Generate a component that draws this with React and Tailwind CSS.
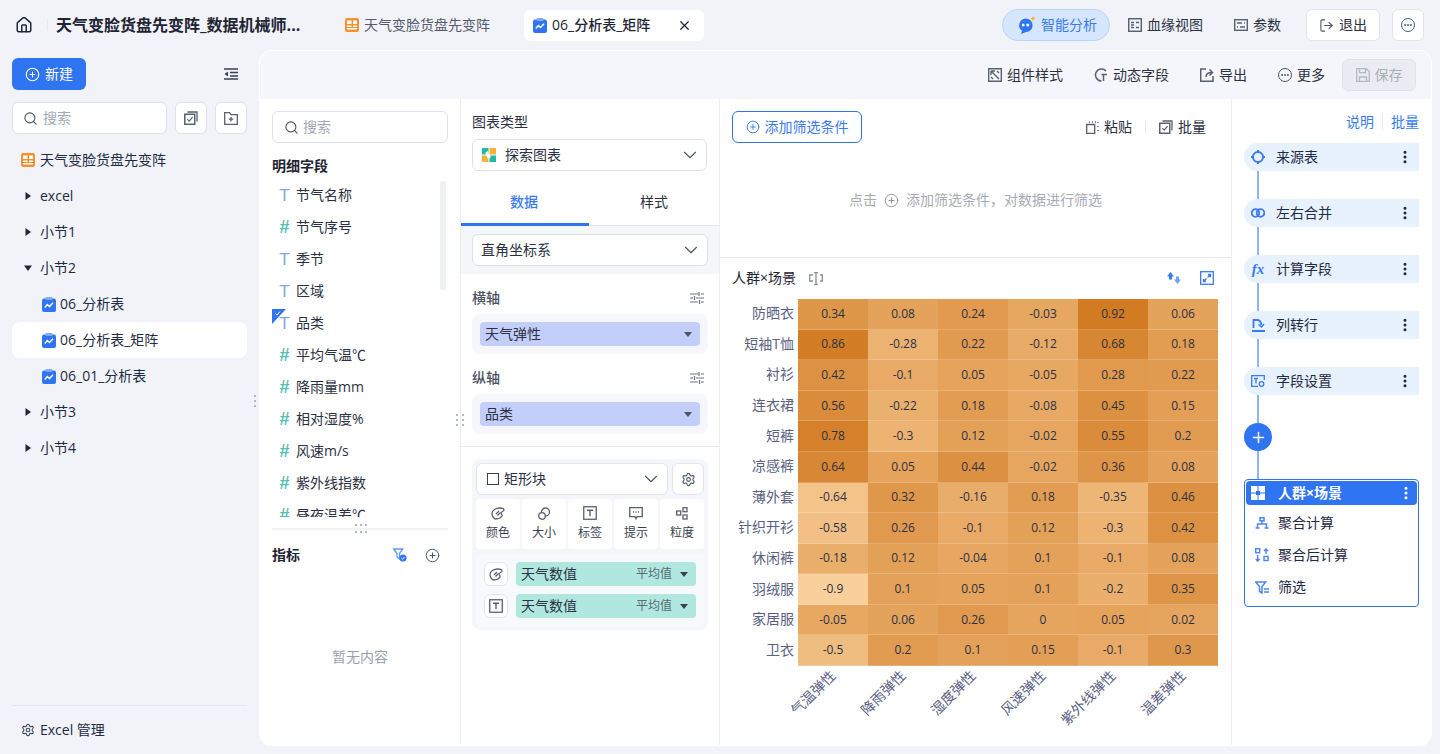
import React from "react";
import {
  House, CirclePlus, Search, X, ChevronDown, Ellipsis, LogOut, Settings, Plus, EllipsisVertical,
} from "lucide-react";

const BLUE = "#2f74f0";
const fieldList = [
  ["T", "节气名称"], ["#", "节气序号"], ["T", "季节"], ["T", "区域"], ["T", "品类", true], ["#", "平均气温℃"],
  ["#", "降雨量mm"], ["#", "相对湿度%"], ["#", "风速m/s"], ["#", "紫外线指数"], ["#", "昼夜温差℃"],
];
const rowLabels = ["防晒衣", "短袖T恤", "衬衫", "连衣裙", "短裤", "凉感裤", "薄外套", "针织开衫", "休闲裤", "羽绒服", "家居服", "卫衣"];
const colLabels = ["气温弹性", "降雨弹性", "湿度弹性", "风速弹性", "紫外线弹性", "温差弹性"];
const matrix = [
  [0.34, 0.08, 0.24, -0.03, 0.92, 0.06],
  [0.86, -0.28, 0.22, -0.12, 0.68, 0.18],
  [0.42, -0.1, 0.05, -0.05, 0.28, 0.22],
  [0.56, -0.22, 0.18, -0.08, 0.45, 0.15],
  [0.78, -0.3, 0.12, -0.02, 0.55, 0.2],
  [0.64, 0.05, 0.44, -0.02, 0.36, 0.08],
  [-0.64, 0.32, -0.16, 0.18, -0.35, 0.46],
  [-0.58, 0.26, -0.1, 0.12, -0.3, 0.42],
  [-0.18, 0.12, -0.04, 0.1, -0.1, 0.08],
  [-0.9, 0.1, 0.05, 0.1, -0.2, 0.35],
  [-0.05, 0.06, 0.26, 0, 0.05, 0.02],
  [-0.5, 0.2, 0.1, 0.15, -0.1, 0.3],
];

// value -> cell colour, light peach to deep orange
const cellColor = (v) => {
  const t = (v + 0.9) / 1.82;
  const r = Math.round(249 - 39 * t);
  const g = Math.round(207 - 84 * t);
  const b = Math.round(155 - 121 * t);
  return `rgb(${r},${g},${b})`;
};

function OrangeIcon({ size = 14 }) {
  return (
    <svg width={size} height={size} viewBox="0 0 14 14" className="shrink-0">
      <rect width="14" height="14" rx="2" fill="#f7902f" />
      <rect x="2" y="2.5" width="4.5" height="3.5" fill="#fff" />
      <rect x="8" y="2.5" width="4" height="3.5" fill="#fff" />
      <rect x="2" y="7.5" width="4.5" height="1.5" fill="#fff" />
      <rect x="2" y="10" width="10" height="1.5" fill="#fff" />
      <rect x="8" y="7.5" width="4" height="1.5" fill="#fff" />
    </svg>
  );
}

function ChartIcon() {
  return (
    <svg width="14" height="15" viewBox="0 0 14 15" className="shrink-0">
      <rect y="1.5" width="14" height="13.5" rx="2" fill={BLUE} />
      <rect x="3.5" y="0" width="7" height="3" rx="1" fill="#7fa9f5" />
      <path d="M2.8 10.5 5.3 7.5 7.5 9.5 11 5.8" fill="none" stroke="#fff" strokeWidth="1.5" />
    </svg>
  );
}

function BoxCheckIcon({ color = "#5b6070" }) {
  return (
    <svg width="14" height="14" viewBox="0 0 14 14" fill="none" stroke={color} className="shrink-0">
      <rect x="0.75" y="3.25" width="10" height="10" strokeWidth="1.5" />
      <path d="M3.5 1h9.5v9.5" strokeWidth="1.3" />
      <path d="M3.2 8.2 5.2 10.2 8.6 6.2" strokeWidth="1.2" />
    </svg>
  );
}

function Caret({ open }) {
  return (
    <svg width="8" height="8" viewBox="0 0 8 8" className="shrink-0">
      {open ? <path d="M0 1.5h8L4 7z" fill="#1f2937" /> : <path d="M1.5 0v8L7 4z" fill="#1f2937" />}
    </svg>
  );
}

function TreeRow({ children, active, indent }) {
  return (
    <div className={`h-9 flex items-center rounded-lg text-sm text-[#1f2a44] ${active ? "bg-white" : ""} ${indent ? "pl-[30px]" : "pl-[12px]"}`}>
      {children}
    </div>
  );
}

function SelectBox({ children, className }) {
  return (
    <div className={`h-8 bg-white border border-[#dcdfe6] rounded-md flex items-center text-sm text-[#2b3142] ${className}`}>
      {children}
    </div>
  );
}

function SlidersIcon() {
  return (
    <svg width="14" height="12" viewBox="0 0 14 12" stroke="#6b7280" strokeWidth="1.2" className="shrink-0">
      <path d="M0 2h8M11 2h3M0 6h3M6 6h8M0 10h8M11 10h3" />
      <path d="M9 0v4M4.5 4v4M9.5 8v4" />
    </svg>
  );
}

function AxisPill({ label }) {
  return (
    <div className="h-10 bg-[#f6f7fb] rounded-lg px-2 flex items-center">
      <div className="w-full h-6 bg-[#c3cefa] rounded flex items-center justify-between pl-[5px] pr-[8px] text-sm text-[#2b3142]">
        {label}
        <svg width="8" height="5" viewBox="0 0 8 5"><path d="M0 0h8L4 5z" fill="#4b5563" /></svg>
      </div>
    </div>
  );
}

function MarkButton({ icon, label }) {
  return (
    <div className="h-[50px] w-11 bg-white rounded flex flex-col items-center pt-[7px] gap-[5px] text-xs text-[#3a4152]">
      <div className="h-[14px] flex items-center">{icon}</div>
      <span className="leading-4">{label}</span>
    </div>
  );
}

function PaletteIcon() {
  return (
    <svg width="14" height="13" viewBox="0 0 14 13" fill="none" stroke="#5b6070" strokeWidth="1.3" className="shrink-0">
      <path d="M1 6.5C1 3 5 1 8.5 1c2 0 4.5.8 4.5 2 0 1.5-3 1.5-3 3s2 1.5 1 3-3 3-6 3C3 12 1 9.5 1 6.5z" />
      <path d="M5 7l3-3M6.5 8.5l3-3" />
    </svg>
  );
}

function TBoxIcon() {
  return (
    <svg width="14" height="14" viewBox="0 0 14 14" fill="none" stroke="#5b6070" className="shrink-0">
      <rect x="0.75" y="0.75" width="12.5" height="12.5" strokeWidth="1.3" />
      <path d="M4 4.2h6M7 4.2v6" strokeWidth="1.4" />
    </svg>
  );
}

function FieldPill({ icon }) {
  return (
    <div className="flex items-center gap-2">
      <div className="w-6 h-6 bg-white border border-[#e4e6eb] rounded-md flex items-center justify-center">{icon}</div>
      <div className="w-[180px] h-6 bg-[#b0e8e0] rounded flex items-center pl-[5px] pr-[8px] text-sm text-[#2b3142]">
        <span className="flex-1">天气数值</span>
        <span className="text-xs text-[#5b6b70] mr-[8px]">平均值</span>
        <svg width="8" height="5" viewBox="0 0 8 5"><path d="M0 0h8L4 5z" fill="#374151" /></svg>
      </div>
    </div>
  );
}

function FlowNode({ icon, label }) {
  return (
    <div className="h-7 bg-[#e8f1fe] rounded-l-full rounded-r-lg flex items-center pl-[7px] pr-[6px] text-sm text-[#1f2a44]">
      <div className="w-[14px] h-[14px] flex items-center justify-center shrink-0">{icon}</div>
      <span className="ml-[11px] flex-1">{label}</span>
      <EllipsisVertical size={16} strokeWidth={2.6} color="#1f2937" />
    </div>
  );
}

const FlowLine = () => <div className="w-[2px] h-7 ml-[13px] bg-[#8fb5f7]" />;

function SubItem({ icon, label }) {
  return (
    <div className="h-8 flex items-center pl-[9px] text-sm text-[#1f2a44]">
      <div className="w-[14px] flex justify-center shrink-0">{icon}</div>
      <span className="ml-[9px]">{label}</span>
    </div>
  );
}

function Tool({ icon, label, className }) {
  return (
    <div className={`flex items-center gap-[5px] text-sm text-[#2b3142] ${className || ""}`}>
      {icon}
      <span>{label}</span>
    </div>
  );
}

function MoreDot() {
  return (
    <div className="w-[14px] h-[14px] rounded-full border border-[#4b5563] flex items-center justify-center shrink-0">
      <Ellipsis size={10} strokeWidth={2.5} color="#4b5563" />
    </div>
  );
}

function Grip({ className, count = 6 }) {
  return (
    <div className={`absolute grid ${className}`}>
      {Array.from({ length: count }).map((_, i) => (
        <span key={i} className="w-[2px] h-[2px] bg-[#b4b8c2]" />
      ))}
    </div>
  );
}

export default function App() {
  return (
    <div className="h-screen w-full overflow-hidden bg-[#f1f3f9] flex flex-col font-['Open_Sans','Noto_Sans_CJK_SC',sans-serif]">
      {/* Top bar */}
      <header className="h-[50px] shrink-0 flex items-center pl-[15px] pr-4">
        <House size={18} strokeWidth={2} color="#1f2937" className="shrink-0" />
        <div className="w-px h-3 bg-[#e5e7eb] ml-[14px]" />
        <div className="w-[250px] ml-2 text-base font-bold text-[#1f2433] whitespace-nowrap">天气变脸货盘先变阵_数据机械师...</div>
        <div className="ml-[39px] flex items-center gap-[5px] text-sm text-[#555b6b] w-[179px]">
          <OrangeIcon />
          <span className="whitespace-nowrap">天气变脸货盘先变阵</span>
        </div>
        <div className="h-[31px] w-[180px] bg-white rounded-md flex items-center pl-[9px] pr-[12px] gap-[5px] text-sm font-medium text-[#1f2433]">
          <ChartIcon />
          <span className="flex-1 whitespace-nowrap">06_分析表_矩阵</span>
          <X size={15} strokeWidth={2} color="#1f2937" />
        </div>
        <div className="ml-auto h-8 w-[108px] rounded-full bg-[#d6e6ff] border border-[#b9d3fb] flex items-center pl-[14px] gap-[4px] text-sm text-[#3a7bf0]">
          <svg width="20" height="20" viewBox="0 0 20 20" className="shrink-0">
            <path d="M8.5 3.5a6.8 6.8 0 0 1 .6 13.6L4 19l1-3.2A6.8 6.8 0 0 1 8.5 3.5z" fill="#2f74f0" />
            <circle cx="6.2" cy="10" r="1.5" fill="#fff" />
            <circle cx="10.8" cy="10" r="1.5" fill="#fff" />
            <path d="M16 0.5l.8 2.2 2.2.8-2.2.8-.8 2.2-.8-2.2-2.2-.8 2.2-.8z" fill="#f8b133" />
          </svg>
          <span>智能分析</span>
        </div>
        <Tool
          className="ml-[18px]"
          icon={
            <svg width="14" height="14" viewBox="0 0 14 14" fill="none" stroke="#5b6070" strokeWidth="1.5" className="shrink-0">
              <rect x="0.7" y="0.7" width="12.6" height="12.6" />
              <path d="M3 4.5h3M3 7h3M3 9.5h3M8 4.5h3M8 9.5h3" />
            </svg>
          }
          label="血缘视图"
        />
        <Tool
          className="ml-[31px]"
          icon={
            <svg width="14" height="12" viewBox="0 0 14 12" fill="none" stroke="#5b6070" strokeWidth="1.4" className="shrink-0">
              <rect x="0.7" y="0.7" width="12.6" height="10.6" />
              <path d="M3 4h5M10 4h1M3 8h1M6 8h5" />
            </svg>
          }
          label="参数"
        />
        <div className="ml-[25px] h-8 w-[74px] bg-white border border-[#e2e5ec] rounded-md flex items-center justify-center gap-[5px] text-sm text-[#2b3142]">
          <LogOut size={15} strokeWidth={1.7} color="#4b5563" />
          退出
        </div>
        <div className="ml-3 h-8 w-8 bg-white border border-[#e2e5ec] rounded-md flex items-center justify-center">
          <MoreDot />
        </div>
      </header>

      <div className="flex-1 flex min-h-0">
        {/* Left sidebar */}
        <aside className="w-[259px] shrink-0 flex flex-col px-3 pt-2 pb-[6px] relative">
          <div className="flex items-center justify-between">
            <div className="h-8 w-[74px] bg-[#2f74f0] rounded-md flex items-center justify-center gap-[5px] text-sm text-white">
              <CirclePlus size={15} strokeWidth={1.8} />
              新建
            </div>
            <svg width="14" height="12" viewBox="0 0 14 12" className="mr-[9px]" stroke="#374151" strokeWidth="1.6">
              <path d="M0 1h14M6 4.5h8M6 8h8M0 11h14" />
              <path d="M4 3.5v5L0.5 6z" fill="#374151" stroke="none" />
            </svg>
          </div>
          <div className="mt-3 flex items-center gap-2">
            <div className="w-[155px] h-8 bg-white border border-[#dfe2ea] rounded-md flex items-center pl-[10px] gap-[5px] text-sm text-[#a3a8b4]">
              <Search size={15} strokeWidth={1.8} color="#4b5563" />
              搜索
            </div>
            <div className="w-8 h-8 bg-white border border-[#dfe2ea] rounded-md flex items-center justify-center"><BoxCheckIcon /></div>
            <div className="w-8 h-8 bg-white border border-[#dfe2ea] rounded-md flex items-center justify-center">
              <svg width="14" height="13" viewBox="0 0 14 13" fill="none" stroke="#5b6070" strokeWidth="1.3">
                <path d="M.7.7h4.8l1.5 2h6.3v9.6H.7z" />
                <path d="M7 5v4.5M4.8 7.2h4.5" />
              </svg>
            </div>
          </div>
          <div className="mt-2">
            <TreeRow>
              <div className="-ml-[3px] flex items-center gap-[5px]"><OrangeIcon />天气变脸货盘先变阵</div>
            </TreeRow>
            <TreeRow><Caret /><span className="ml-2">excel</span></TreeRow>
            <TreeRow><Caret /><span className="ml-2">小节1</span></TreeRow>
            <TreeRow><Caret open /><span className="ml-2">小节2</span></TreeRow>
            <TreeRow indent><ChartIcon /><span className="ml-1">06_分析表</span></TreeRow>
            <TreeRow indent active><ChartIcon /><span className="ml-1">06_分析表_矩阵</span></TreeRow>
            <TreeRow indent><ChartIcon /><span className="ml-1">06_01_分析表</span></TreeRow>
            <TreeRow><Caret /><span className="ml-2">小节3</span></TreeRow>
            <TreeRow><Caret /><span className="ml-2">小节4</span></TreeRow>
          </div>
          <div className="mt-auto border-t border-[#e5e7ee] h-[43px] pt-[14px] pl-[9px] flex items-start gap-[5px] text-sm text-[#1f2a44]">
            <Settings size={14} strokeWidth={1.8} color="#374151" className="mt-[3px]" />
            Excel 管理
          </div>
          <Grip count={3} className="right-[3px] top-[345px] gap-y-[3px]" />
        </aside>

        {/* Main card */}
        <main className="flex-1 mr-2 mb-2 rounded-xl border border-white bg-white overflow-hidden flex flex-col min-w-0">
          <div className="h-[48px] shrink-0 bg-[#f5f6fb] flex items-center justify-end pr-[15px]">
            <Tool
              icon={
                <svg width="14" height="14" viewBox="0 0 14 14" fill="none" stroke="#5b6070" strokeWidth="1.4" className="shrink-0">
                  <path d="M.7.7h12.6v12.6H.7zM3 3l8 8M3 3h4M3 3v4M9 3l2 2M3 9l2 2" />
                </svg>
              }
              label="组件样式"
            />
            <Tool
              className="ml-[31px]"
              icon={
                <svg width="14" height="14" viewBox="0 0 14 14" fill="none" stroke="#5b6070" strokeWidth="1.5" className="shrink-0">
                  <path d="M12 3A6 6 0 1 0 7.500 13M7.500 6.500H13M9.500 6.500V13" />
                </svg>
              }
              label="动态字段"
            />
            <Tool
              className="ml-[31px]"
              icon={
                <svg width="14" height="14" viewBox="0 0 14 14" fill="none" stroke="#5b6070" strokeWidth="1.5" className="shrink-0">
                  <path d="M6 1H.7v12.300H13V8M6 9c0-3 2-4.500 6-4.500M9.500 1.500l3 3-3 3" />
                </svg>
              }
              label="导出"
            />
            <Tool className="ml-[31px]" icon={<MoreDot />} label="更多" />
            <div className="ml-[17px] h-8 w-[74px] bg-[#ebecf1] border border-[#e0e2e8] rounded-md flex items-center justify-center gap-[5px] text-sm text-[#a9adb8]">
              <svg width="14" height="14" viewBox="0 0 14 14" fill="none" stroke="#b4b8c2" strokeWidth="1.3">
                <path d="M.7.7h9.600L13.300 3.500v9.800H.7zM3.500.7v4h6v-4M3.500 13V9h7v4" />
              </svg>
              保存
            </div>
          </div>

          <div className="flex-1 flex min-h-0">
            {/* Fields */}
            <section className="w-[201px] shrink-0 border-r border-[#eceef2] flex flex-col relative">
              <div className="mt-3 ml-3 w-[176px] h-8 border border-[#dfe2ea] rounded-md flex items-center pl-[11px] gap-[4px] text-sm text-[#a3a8b4]">
                <Search size={15} strokeWidth={1.8} color="#4b5563" />
                搜索
              </div>
              <div className="ml-3 mt-[13px] text-sm font-bold text-[#1f2433] leading-5">明细字段</div>
              <div className="h-[338px] shrink-0 overflow-hidden relative mt-[3px]">
                <div className="absolute right-[14px] top-[2px] w-[6px] h-[109px] rounded bg-[#f0f1f3]" />
                {fieldList.map(([type, name, mark]) => (
                  <div key={name} className="h-8 flex items-center pl-[18px] text-sm text-[#2b3142] relative">
                    {type === "T" ? (
                      <span className="w-[13px] font-['Liberation_Sans',sans-serif] text-[17px] leading-none text-[#8aa5e0] text-center">T</span>
                    ) : (
                      <span className="w-[13px] font-['Liberation_Sans',sans-serif] text-[18px] font-bold leading-none text-[#56bdb0] text-center">#</span>
                    )}
                    <span className="ml-[5px]">{name}</span>
                    {mark && (
                      <svg width="14" height="15" viewBox="0 0 14 15" className="absolute left-[12px] top-[2px]">
                        <path d="M0 0h14L0 15z" fill={BLUE} />
                        <path d="M3.500 4.500 5 6 8 2.500" fill="none" stroke="#fff" strokeWidth="1" />
                      </svg>
                    )}
                  </div>
                ))}
              </div>
              <div className="mt-[11px] mx-3 h-[2px] shrink-0 bg-[#f1f2f4] relative">
                <Grip className="left-[83px] -top-[4px] grid-cols-3 gap-x-[3px] gap-y-[5px]" />
              </div>
              <div className="mt-[15px] mx-3 flex items-center text-sm font-bold text-[#1f2433] leading-5">
                <span className="flex-1">指标</span>
                <svg width="14" height="14" viewBox="0 0 14 14" className="mr-[18px]">
                  <path d="M.7 1h9L6.500 5.500V11L4 9V5.500z" fill="none" stroke="#5b9bf5" strokeWidth="1.300" />
                  <circle cx="10" cy="10" r="3.500" fill={BLUE} />
                  <path d="M8.300 10l1.200 1.200 2-2.200" stroke="#fff" strokeWidth="1" fill="none" />
                </svg>
                <CirclePlus size={15} strokeWidth={1.6} color="#4b5563" className="mr-[8px]" />
              </div>
              <div className="flex-1 flex items-center justify-center text-sm text-[#9a9fac] pt-[4px]">暂无内容</div>
              <Grip className="-right-[4px] top-[315px] grid-cols-2 gap-x-[4px] gap-y-[3px]" />
            </section>

            {/* Config */}
            <section className="w-[259px] shrink-0 border-r border-[#eceef2] flex flex-col">
              <div className="pl-[11px] pr-3 pt-[13px]">
                <div className="text-sm text-[#2b3142] leading-5">图表类型</div>
                <SelectBox className="mt-[7px] pl-[9px] pr-[5px] w-[235px]">
                  <svg width="14" height="14" viewBox="0 0 14 14" className="shrink-0">
                    <rect width="6.500" height="6.500" fill="#20b8a8" />
                    <rect x="7.500" width="6.500" height="6.500" fill="#f8b133" />
                    <rect y="7.500" width="6.500" height="6.500" fill="#f8b133" />
                    <rect x="7.500" y="7.500" width="6.500" height="6.500" fill="#20b8a8" />
                    <path d="M3 5l3-2 1 3 2 3-3 2z" fill="#fff" />
                  </svg>
                  <span className="ml-[9px] flex-1">探索图表</span>
                  <ChevronDown size={22} strokeWidth={1.2} color="#4b5563" />
                </SelectBox>
              </div>
              <div className="mt-[9px] h-[46px] shrink-0 flex border-b border-[#e4e6eb] text-sm">
                <div className="w-32 pr-[2px] border-b-[3px] border-[#2f74f0] -mb-px flex items-center justify-center font-medium text-[#3a7bf0]">数据</div>
                <div className="flex-1 pb-[2px] flex items-center justify-center text-[#2b3142]">样式</div>
              </div>
              <div className="bg-[#f5f6f8] h-12 shrink-0 pl-[11px] pt-2">
                <SelectBox className="w-[236px] pl-2 pr-[5px]">
                  <span className="flex-1">直角坐标系</span>
                  <ChevronDown size={22} strokeWidth={1.2} color="#4b5563" />
                </SelectBox>
              </div>
              <div className="pl-[11px] pr-[11px] h-[173px] shrink-0 border-b border-[#e6e8ec]">
                <div className="h-10 flex items-center justify-between pr-[4px] pt-[7px] text-sm font-medium text-[#4b5261]">横轴 <SlidersIcon /></div>
                <AxisPill label="天气弹性" />
                <div className="h-10 flex items-center justify-between pr-[4px] pt-[7px] text-sm font-medium text-[#4b5261]">纵轴 <SlidersIcon /></div>
                <AxisPill label="品类" />
              </div>
              <div className="ml-[11px] mt-3 w-[236px] h-[171px] bg-[#f5f6fa] rounded-lg p-1">
                <div className="flex gap-1">
                  <div className="w-[192px] h-8 bg-white border border-[#e4e6eb] rounded-md flex items-center pl-[10px] pr-[5px] text-sm text-[#2b3142]">
                    <span className="w-3 h-3 border border-[#374151] shrink-0" />
                    <span className="ml-[5px] flex-1">矩形块</span>
                    <ChevronDown size={22} strokeWidth={1.2} color="#4b5563" />
                  </div>
                  <div className="w-8 h-8 bg-white border border-[#e4e6eb] rounded-md flex items-center justify-center">
                    <Settings size={15} strokeWidth={1.7} color="#4b5563" />
                  </div>
                </div>
                <div className="flex gap-[2px] mt-1">
                  <MarkButton icon={<PaletteIcon />} label="颜色" />
                  <MarkButton
                    icon={
                      <svg width="13" height="13" viewBox="0 0 13 13" fill="none" stroke="#5b6070" strokeWidth="1.3">
                        <circle cx="7.500" cy="5" r="4" />
                        <circle cx="4" cy="9" r="3.300" fill="#fff" />
                      </svg>
                    }
                    label="大小"
                  />
                  <MarkButton icon={<TBoxIcon />} label="标签" />
                  <MarkButton
                    icon={
                      <svg width="14" height="13" viewBox="0 0 14 13" fill="none" stroke="#5b6070" strokeWidth="1.3">
                        <path d="M.7.7h12.600v9H8l-1 2-1-2H.7z" />
                        <path d="M4 5h1M6.500 5h1M9 5h1" />
                      </svg>
                    }
                    label="提示"
                  />
                  <MarkButton
                    icon={
                      <svg width="12" height="13" viewBox="0 0 12 13" fill="none" stroke="#5b6070" strokeWidth="1.3">
                        <rect x="7" y=".7" width="4" height="4" />
                        <rect x=".7" y="4" width="4" height="4" />
                        <rect x="7" y="8" width="4" height="4" />
                      </svg>
                    }
                    label="粒度"
                  />
                </div>
                <div className="mt-[5px] h-[72px] bg-[#f8f9fb] rounded px-2 pt-2 flex flex-col gap-2">
                  <FieldPill icon={<PaletteIcon />} />
                  <FieldPill icon={<TBoxIcon />} />
                </div>
              </div>
            </section>

            {/* Chart */}
            <section className="w-[512px] shrink-0 border-r border-[#eceef2] flex flex-col">
              <div className="h-[159px] shrink-0 border-b border-[#e6e8ec] flex flex-col px-3">
                <div className="mt-3 flex items-center">
                  <div className="w-[130px] h-8 border border-[#2f74f0] rounded-md flex items-center justify-center gap-[5px] text-sm text-[#3a7bf0]">
                    <CirclePlus size={14} strokeWidth={1.6} />
                    添加筛选条件
                  </div>
                  <Tool
                    className="ml-auto"
                    icon={
                      <svg width="13" height="13" viewBox="0 0 13 13" fill="none" stroke="#5b6070" strokeWidth="1.300" className="shrink-0">
                        <path d="M.7 3.500h8v9h-8z" />
                        <path d="M3 1h1M6 1h1M9 1h1M12 1v1M12 5v1M12 9v1" />
                      </svg>
                    }
                    label="粘贴"
                  />
                  <div className="w-px h-3 bg-[#e5e7eb] mx-[13px]" />
                  <Tool icon={<BoxCheckIcon />} label="批量" />
                  <div className="w-[13px]" />
                </div>
                <div className="mt-[47px] pl-[117px] flex items-center text-sm text-[#a8abb2] whitespace-nowrap">
                  点击
                  <CirclePlus size={15} strokeWidth={1.5} className="mx-[7px] shrink-0" color="#8d9099" />
                  添加筛选条件，对数据进行筛选
                </div>
              </div>
              <div className="h-10 shrink-0 flex items-center pl-3 pr-[17px] text-sm text-[#1f2433]">
                人群×场景
                <svg width="14" height="13" viewBox="0 0 14 13" fill="none" stroke="#8b8f9a" strokeWidth="1.300" className="ml-[13px]">
                  <path d="M4 3H.7v6H4M11 3h2.300v6H11M5 .7h4M5 12.300h4M7 .7v11.600" />
                </svg>
                <svg width="16" height="14" viewBox="0 0 16 14" className="ml-auto">
                  <path d="M4.500 1 8 5.500H6v3H3v-3H1z" fill="#3a7bf0" />
                  <path d="M11.500 13 8 8.500h2v-3h3v3h2z" fill="#6fa0f5" />
                </svg>
                <svg width="14" height="14" viewBox="0 0 14 14" fill="none" stroke="#3a7bf0" strokeWidth="1.300" className="ml-[18px]">
                  <rect x=".7" y=".7" width="12.600" height="12.600" />
                  <path d="M8 3.500h2.500V6M10.500 3.500 7.500 6.500M6 10.500H3.500V8M3.500 10.500l3-3" />
                </svg>
              </div>
              <div className="mt-[1px] grid grid-cols-[78px_repeat(6,70px)] grid-rows-[repeat(12,minmax(0,1fr))] h-[367px]">
                {matrix.map((row, i) => (
                  <React.Fragment key={rowLabels[i]}>
                    <div className="flex items-center justify-end pr-1 pb-[2px] text-sm text-[#5a6082] whitespace-nowrap">{rowLabels[i]}</div>
                    {row.map((v, j) => (
                      <div
                        key={j}
                        className="flex items-center justify-center text-xs text-[#2b3142] border-b border-white/20"
                        style={{ backgroundColor: cellColor(v) }}
                      >
                        {v}
                      </div>
                    ))}
                  </React.Fragment>
                ))}
              </div>
              <div className="grid grid-cols-[78px_repeat(6,70px)]">
                <div />
                {colLabels.map((c) => (
                  <div key={c} className="flex justify-end pr-[35px] -mt-[3px]">
                    <span className="origin-right -rotate-45 whitespace-nowrap h-5 leading-5 text-sm text-[#5a6082]">{c}</span>
                  </div>
                ))}
              </div>
            </section>

            {/* Flow */}
            <section className="flex-1 min-w-0 pl-3 pr-3">
              <div className="pt-[13px] h-[44px] flex items-start justify-end text-sm text-[#3a7bf0]">
                <span>说明</span>
                <span className="w-px h-4 bg-[#e5e7eb] mx-2 mt-[2px]" />
                <span>批量</span>
              </div>
              <FlowNode
                label="来源表"
                icon={
                  <svg width="14" height="14" viewBox="0 0 14 14" fill="none" stroke="#3a7bf0" strokeWidth="2">
                    <circle cx="7" cy="7" r="5" />
                    <path d="M7 0v3M7 11v3M0 7h3M11 7h3" />
                  </svg>
                }
              />
              <FlowLine />
              <FlowNode
                label="左右合并"
                icon={
                  <svg width="14" height="10" viewBox="0 0 14 10" fill="none" stroke="#3a7bf0" strokeWidth="1.800">
                    <circle cx="4.500" cy="5" r="3.800" />
                    <circle cx="9.500" cy="5" r="3.800" />
                  </svg>
                }
              />
              <FlowLine />
              <FlowNode label="计算字段" icon={<span className="font-['Liberation_Serif',serif] italic font-bold text-[15px] leading-none text-[#3a7bf0]">fx</span>} />
              <FlowLine />
              <FlowNode
                label="列转行"
                icon={
                  <svg width="13" height="13" viewBox="0 0 13 13" fill="none" stroke="#3a7bf0" strokeWidth="1.800">
                    <path d="M1.500 9V1H5c3 0 4 2 4.500 5M0 12h13" />
                    <path d="M6.500 5.500 9.500 8l2.500-3" strokeWidth="1.400" />
                  </svg>
                }
              />
              <FlowLine />
              <FlowNode
                label="字段设置"
                icon={
                  <svg width="14" height="12" viewBox="0 0 14 12" fill="none" stroke="#3a7bf0" strokeWidth="1.300">
                    <path d="M13.300 5V.7H.7v10.600H7" />
                    <path d="M3 3.500h4M5 3.500v5" />
                    <circle cx="10.500" cy="9" r="2.300" />
                  </svg>
                }
              />
              <FlowLine />
              {/* plus node */}
              <div className="w-7 h-7 rounded-full bg-[#2f74f0] flex items-center justify-center">
                <Plus size={17} strokeWidth={2.2} color="#fff" />
              </div>
              <FlowLine />
              <div className="h-[128px] border border-[#2f74f0] rounded p-px">
                <div className="h-6 bg-[#2f74f0] rounded flex items-center pl-[5px] pr-[3px] text-sm font-bold text-white">
                  <svg width="14" height="14" viewBox="0 0 14 14" className="shrink-0">
                    <rect width="6.500" height="6.500" fill="#fff" />
                    <rect x="7.500" width="6.500" height="6.500" fill="#fff" />
                    <rect y="7.500" width="6.500" height="6.500" fill="#fff" />
                    <rect x="7.500" y="7.500" width="6.500" height="6.500" fill="#fff" />
                    <path d="M5 5l4 0 0 4-4 0z" fill="#2f74f0" />
                  </svg>
                  <span className="ml-[13px] flex-1">人群×场景</span>
                  <EllipsisVertical size={16} strokeWidth={2.6} color="#fff" />
                </div>
                <div className="pt-[2px]">
                  <SubItem
                    label="聚合计算"
                    icon={
                      <svg width="14" height="12" viewBox="0 0 14 12" fill="none" stroke="#4a86ee" strokeWidth="1.500">
                        <path d="M5 .8h4v3H5zM7 4v3M2.500 11V7h9v4M.5 11h4M9.500 11h4" />
                      </svg>
                    }
                  />
                  <SubItem
                    label="聚合后计算"
                    icon={
                      <svg width="14" height="14" viewBox="0 0 14 14" fill="none" stroke="#4a86ee" strokeWidth="1.400">
                        <rect x=".7" y=".7" width="4" height="4" />
                        <rect x="9" y="8.500" width="4" height="4" />
                        <path d="M2.700 7v6M.7 11l2 2 2-2M11 6V1M9 3l2-2 2 2" />
                      </svg>
                    }
                  />
                  <SubItem
                    label="筛选"
                    icon={
                      <svg width="14" height="13" viewBox="0 0 14 13" fill="none" stroke="#4a86ee" strokeWidth="1.500">
                        <path d="M.7 1h10L7 5.500V12L4.500 10.500V5.500zM9 8h5M9 11h5" />
                      </svg>
                    }
                  />
                </div>
              </div>
            </section>
          </div>
        </main>
      </div>
    </div>
  );
}
